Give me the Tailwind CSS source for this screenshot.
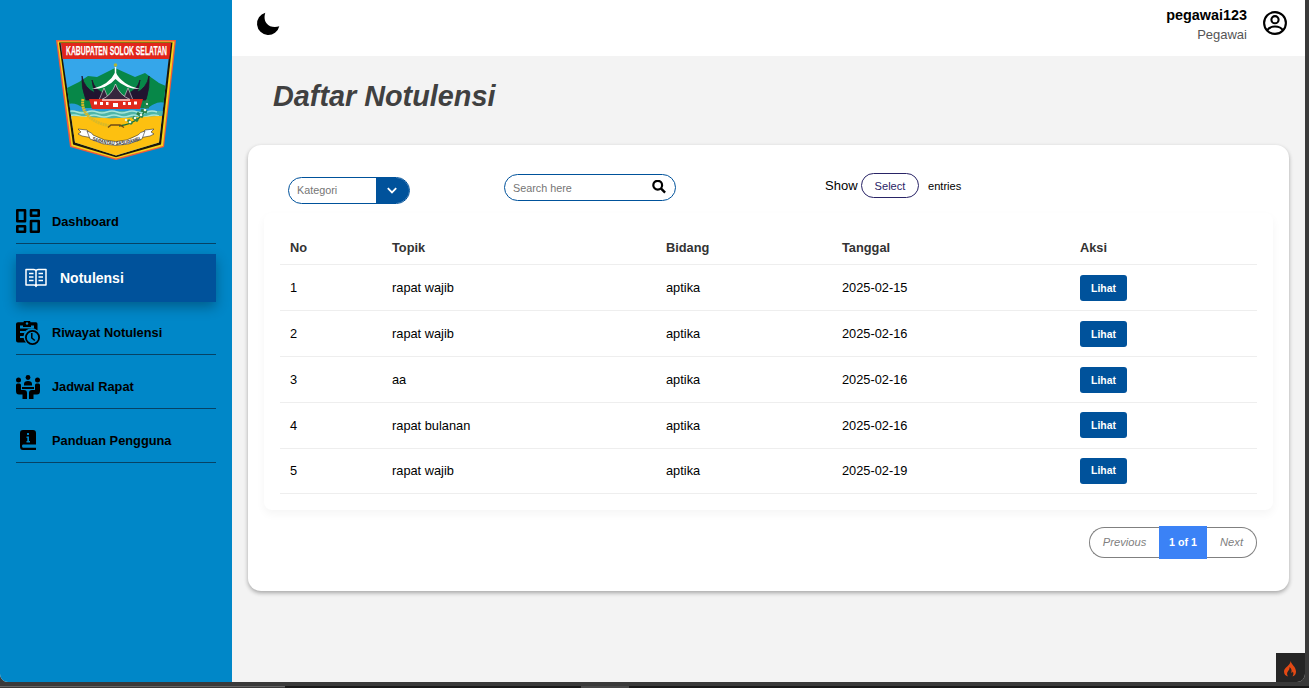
<!DOCTYPE html>
<html lang="id">
<head>
<meta charset="utf-8">
<title>Daftar Notulensi</title>
<script src="https://cdn.jsdelivr.net/npm/@tailwindcss/browser@4"></script>
</head>
<body class="h-[688px] w-[1309px] overflow-hidden bg-[#3a3a3a] font-['Liberation_Sans',Arial,sans-serif] text-[12.8px] text-black">
<div class="relative flex h-[682px] w-[1305px] overflow-hidden rounded-b-lg bg-[#f3f3f3]">
  <aside class="flex w-[232px] shrink-0 flex-col bg-[#0087c8] px-4 pt-[39px]">
    <svg class="mx-auto h-[122px] w-[122px] shrink-0 overflow-visible" viewBox="0 0 122 122">
      <defs><clipPath id="shield"><path d="M5.500 4H115.500L104 103.500L61 116.500L20 103.500Z"/></clipPath></defs>
      <path d="M1 1H121L109 108L61 121L15 108Z" fill="#ef5a3c"/>
      <path d="M2.500 2.500H119.500L108 107L61 119.500L16.500 107Z" fill="#f6d21c"/>
      <path d="M4 3.500H117.500L106 105.500L61 118.200L18 105.500Z" fill="#1c1708"/>
      <g clip-path="url(#shield)">
        <path d="M0 0H122V122H0Z" fill="#35a6ea"/>
        <path d="M4 53L24 43L33 37L42 38L60 29L80 38L90 34L104 44L118 50V72H4Z" fill="#078748"/>
        <path d="M8 67C16 62 23 65 28 69H93C98 65 106 60 114 66V80H8Z" fill="#249bd7"/>
        <path d="M10 72H114V79H10Z" fill="#4fb5a8"/>
        <path d="M12 73q5-2 10 0t10 0t10 0t10 0t10 0t10 0t10 0t10 0t10 0M14 77q5-2 10 0t10 0t10 0t10 0t10 0t10 0t10 0t10 0t10 0" fill="none" stroke="#a9e6d8" stroke-width="1.400"/>
        <path d="M8 77C35 77 45 80 61 79C80 79 90 77 113 77V122H8Z" fill="#fdc010"/>
      </g>
      <path d="M6 4H116L114.300 20H7.700Z" fill="#e1251b"/>
      <text x="11" y="15.800" textLength="101" lengthAdjust="spacingAndGlyphs" font-size="13.200" font-weight="700" fill="#fff" stroke="#fff" stroke-width=".25">KABUPATEN SOLOK SELATAN</text>
      <circle cx="60.500" cy="26" r="1.800" fill="#b0b43a"/><path d="M60.500 28V36" stroke="#fff" stroke-width="1.500"/>
      <path d="M27 37Q29 49 40 54L47 61H31Q26 48 27 37ZM94 37Q92 49 81 54L75 61H91Q95 48 94 37ZM37 41Q40 52 51 55L54 61H42Q38 50 37 41ZM85 41Q82 52 71 55L68 61H80Q84 50 85 41Z" fill="#211430" stroke="#211430" stroke-width=".8"/>
      <path d="M49 49L54 61H44ZM73 49L78 61H68Z" fill="#35223d" stroke="#ddd" stroke-width=".6"/>
      <path d="M37 50Q54 46 60.500 33Q67 46 85 50Q70 50 60.500 40Q52 50 37 50Z" fill="#fff"/>
      <path d="M46 61Q57 56 60.500 45Q64 56 76 61Z" fill="#37253e" stroke="#ddd" stroke-width=".7"/>
      <path d="M34 60H88L85 70H37Z" fill="#df2b1e"/>
      <path d="M47 61H75" stroke="#fff" stroke-width="1.200"/>
      <path d="M39 62.500h3v3h-3zM45 63h3v3h-3zM51 63h2.500v3h-2.500zM58 64h5v4h-5zM68 63h2.500v3h-2.500zM73 63h3v3h-3zM79 62.500h3v3h-3z" fill="#fff"/>
      <path d="M28 60C25 76 41 85 56 87" fill="none" stroke="#d9b928" stroke-width="3" stroke-dasharray="2 .5"/>
      <path d="M92 62C92 76 80 85 64 87" fill="none" stroke="#14713f" stroke-width="1.300"/>
      <path d="M93 61l-3 4m4 3l-5 0m3 5l-6-2m2 7l-6-4m1 8l-5-4m-1 7l-4-4" stroke="#28834a" stroke-width="3"/>
      <g fill="#eef7e7"><circle cx="92" cy="65" r="1.100"/><circle cx="90" cy="71" r="1.300"/><circle cx="86" cy="76" r="1.300"/><circle cx="80" cy="79" r="1.300"/><circle cx="75" cy="83" r="1.300"/><circle cx="71" cy="81" r="1.200"/></g>
      <path d="M53 88.500L56 86H65L69 88.500" fill="none" stroke="#704914" stroke-width="1.300"/>
      <path d="M23 90L32 91L38 99L27 97L23 95L26 93ZM99 90L90 91L84 99L95 97L99 95L96 93Z" fill="#fff" stroke="#333" stroke-width=".6"/>
      <path d="M32 92Q38 94 38 96Q61 109 83 96Q85 93 90 92L87 100Q61 113 35 100Z" fill="#fff" stroke="#333" stroke-width=".6"/>
      <path id="curve" d="M36 100.500Q61 111.500 87 100.500" fill="none"/>
      <text font-size="5.200" font-weight="700" fill="#333"><textPath href="#curve" startOffset="1" textLength="50" lengthAdjust="spacingAndGlyphs">SARANTAU SASURAMBI</textPath></text>
    </svg>
    <nav class="mt-[38px] flex flex-col font-bold">
      <a class="flex h-[45px] items-center gap-3 border-b border-[#064265]">
        <svg class="size-6" viewBox="0 0 24 24" fill="none" stroke="#000" stroke-width="2.600"><path d="M1.300 1.300H9V12.300H1.300ZM15 1.300H22.700V6.700H15ZM1.300 17.300H9V22.700H1.300ZM15 12H22.700V22.700H15Z" stroke-linejoin="round"/></svg>
        <span class="pt-px">Dashboard</span></a>
      <a class="mt-[10px] flex h-12 items-center gap-3 bg-[#00529b] pl-2 text-sm text-white shadow-[0_5px_12px_rgba(0,0,0,0.3)]">
        <svg class="h-5 w-6" viewBox="0 0 24 20" fill="none" stroke="#fff"><path d="M2 1.500H9.500Q12 1.500 12 3.500Q12 1.500 14.500 1.500H22V17H14Q12 17 12 18.500Q12 17 10 17H2ZM12 3.500V18.500" stroke-width="1.500" stroke-linejoin="round"/><path d="M5 5.500H9.500M5 9H9.500M5 12.500H9.500M14.500 5.500H19M14.500 9H19M14.500 12.500H19" stroke-width="1.500"/></svg>
        <span>Notulensi</span></a>
      <a class="mt-2 flex h-[45px] items-center gap-3 border-b border-[#064265]">
        <svg class="mt-[2px] size-6" viewBox="0 0 24 24"><path d="M2 1.200H7.500A3.600 3.600 0 0 1 14.500 1.200H20Q21.500 1.200 21.500 3V9.500A7.800 7.800 0 0 0 10 21.500H2Q0 21.500 0 19.500V3Q0 1.200 2 1.200Z"/><path d="M4 4.500H7V6H15V4.500H18V7.500H4ZM4 10H10L8.500 12H4ZM4 15H8V17H4Z" fill="#0087c8"/><circle cx="11" cy="2.500" r="1.200" fill="#0087c8"/><circle cx="16.500" cy="16.500" r="6.600" fill="#0087c8" stroke="#000" stroke-width="1.800"/><path d="M15.800 12V17L18.800 19.500" fill="none" stroke="#000" stroke-width="1.500"/></svg>
        <span class="pt-px">Riwayat Notulensi</span></a>
      <a class="mt-[9px] flex h-[45px] items-center gap-3 border-b border-[#064265]">
        <svg class="mt-[2px] size-6" viewBox="0 0 24 24"><circle cx="12" cy="2.500" r="2.400"/><circle cx="2.500" cy="5" r="2.500"/><circle cx="21.500" cy="5" r="2.500"/><path d="M8 10.500V9Q8 6 12 6T16 9V10.500ZM6 12H18V14H6ZM0 10Q0 8.500 1.500 8.500H3.500Q5 8.500 5 10V15H8Q11 15 11 18V24H6.500V19.500H3Q0 19.500 0 16ZM24 10Q24 8.500 22.500 8.500H20.500Q19 8.500 19 10V15H16Q13 15 13 18V24H17.500V19.500H21Q24 19.500 24 16Z"/></svg>
        <span class="pt-px">Jadwal Rapat</span></a>
      <a class="mt-[9px] flex h-[45px] items-center gap-3 border-b border-[#064265]">
        <svg class="size-6" viewBox="0 0 24 24"><path d="M7 2H17Q20 2 20 5V16.500H7Q6 16.500 6 18T7 19.800H20V22H7Q4 22 4 18.500V5Q4 2 7 2Z"/><path d="M11 5H13V7H11ZM10.500 8.500H13V13H14V14.500H10.500V13H11.300V10H10.500Z" fill="#0087c8"/></svg>
        <span class="pt-px">Panduan Pengguna</span></a>
    </nav>
  </aside>

  <main class="flex flex-1 flex-col">
    <header class="flex h-14 shrink-0 items-start justify-between bg-white pr-[18px] pl-6">
      <svg class="mt-3 size-6" viewBox="0 0 24 24"><path d="M9.300 .8C8.300 4 8 8 10.500 11.200C13.500 15 18.500 15.800 23.300 14.300A11.300 11.300 0 1 1 9.300 .8Z"/></svg>
      <div class="flex gap-4">
        <div class="flex flex-col items-end pt-[6px]"><b class="text-[14.4px] leading-[19px]">pegawai123</b><span class="text-[13px] leading-[19px] text-[#555]">Pegawai</span></div>
        <svg class="mt-[11px] size-6" viewBox="0 0 24 24" fill="none" stroke="#000" stroke-width="2.100"><circle cx="12" cy="12" r="10.900"/><circle cx="12" cy="8.700" r="3.600"/><path d="M4 19.500C7 14.200 17 14.200 20 19.500"/></svg>
      </div>
    </header>
    <h1 class="mt-[23px] ml-[41px] text-[28.8px] leading-[34px] font-bold text-[#404040] italic">Daftar Notulensi</h1>
    <section class="mt-8 ml-4 flex h-[446px] w-[1041px] flex-col rounded-[13px] bg-white px-4 shadow-[0_2px_4px_rgba(0,0,0,0.32)]">
      <div class="flex h-[68px] shrink-0 items-start pl-6 text-[11px]">
        <div class="mt-8 flex h-[27px] w-[122px] overflow-hidden rounded-[14px] border border-[#00529b]">
          <span class="w-[87px] pl-2 text-[10.800px] leading-[25px] text-[#757575]">Kategori</span>
          <span class="flex flex-1 items-center justify-center bg-[#00529b] pr-[2px]"><svg class="size-[10px]" viewBox="0 0 10 10"><path d="M.8 2.200L5 6.400L9.200 2.200" fill="none" stroke="#fff" stroke-width="1.800"/></svg></span>
        </div>
        <div class="mt-[29px] ml-[94px] flex h-[27px] w-[172px] items-start justify-between rounded-[14px] border border-[#00529b] pr-[9px] pl-2 text-[10.800px] leading-[26px] text-[#757575]">Search here
          <svg class="mt-[5px] size-[14px]" viewBox="0 0 14 14" fill="none" stroke="#000"><circle cx="5.700" cy="5.200" r="4.400" stroke-width="2.200"/><path d="M8.900 8.400L13.100 12.600" stroke-width="2.400"/></svg>
        </div>
        <div class="mt-7 ml-[149px] flex h-[25px] items-center text-[11.100px]"><span class="w-8 text-[13px]">Show</span><span class="ml-1 flex h-[25px] w-[58px] items-center justify-center rounded-[13px] border border-[#292466] pt-px text-[#292466]">Select</span><span class="ml-[9px] pt-px">entries</span></div>
      </div>
      <div class="h-[297px] w-[1009px] shrink-0 rounded-lg px-4 pt-4 shadow-[0_4px_10px_rgba(0,0,0,0.045)]">
        <table class="w-[977px] table-fixed border-collapse text-left text-[12.800px]">
          <colgroup><col class="w-[102px]"><col class="w-[274px]"><col class="w-[176px]"><col class="w-[238px]"><col></colgroup>
          <thead><tr class="h-[35px] border-b border-[#eee] text-[#333] [&>th]:pt-[2px] [&>th]:pl-[10px] [&>th]:font-bold"><th>No</th><th>Topik</th><th>Bidang</th><th>Tanggal</th><th>Aksi</th></tr></thead>
          <tbody class="[&>tr]:h-[46px] [&>tr]:border-b [&>tr]:border-[#eee] [&_td]:p-0 [&_td]:pt-[2px] [&_td]:pl-[10px] [&_a]:flex [&_a]:h-[26px] [&_a]:w-[47px] [&_a]:items-center [&_a]:justify-center [&_a]:rounded-[3px] [&_a]:bg-[#00529b] [&_a]:pt-px [&_a]:text-[10.400px] [&_a]:font-bold [&_a]:text-white">
            <tr><td>1</td><td>rapat wajib</td><td>aptika</td><td>2025-02-15</td><td><a>Lihat</a></td></tr>
            <tr><td>2</td><td>rapat wajib</td><td>aptika</td><td>2025-02-16</td><td><a>Lihat</a></td></tr>
            <tr><td>3</td><td>aa</td><td>aptika</td><td>2025-02-16</td><td><a>Lihat</a></td></tr>
            <tr><td>4</td><td>rapat bulanan</td><td>aptika</td><td>2025-02-16</td><td class="pt-0!"><a>Lihat</a></td></tr>
            <tr class="h-[45px]!"><td class="pt-0!">5</td><td class="pt-0!">rapat wajib</td><td class="pt-0!">aptika</td><td class="pt-0!">2025-02-19</td><td class="pt-0!"><a>Lihat</a></td></tr>
          </tbody>
        </table>
      </div>
      <div class="mt-4 mr-4 flex h-[33px] items-center self-end text-[11.200px] text-[#808080] italic">
        <span class="flex h-[31px] w-[70px] items-center justify-center rounded-l-[16px] border border-r-0 border-[#808080]">Previous</span>
        <b class="flex h-[33px] w-12 items-center justify-center bg-[#3b82f6] text-[10.700px] text-white not-italic">1 of 1</b>
        <span class="flex h-[31px] w-[50px] items-center justify-center rounded-r-[16px] border border-l-0 border-[#808080]">Next</span>
      </div>
    </section>
  </main>
  <div class="absolute right-0 bottom-0 flex h-[29px] w-[29px] items-center justify-center bg-[#252525] pt-[2px] pr-px">
    <svg class="h-4 w-3" viewBox="0 0 12 16"><path d="M6.500 0C7.500 3.500 12 6 12 10.500Q12 14.500 8.500 15.500Q10.200 13 9 10.500Q8.300 12 7.200 11.500Q8.500 8.500 5.500 6Q6 8.500 4.200 10Q2 12.500 4 15.500Q0 14.500 0 10.500C0 6 6.500 5 6.500 0Z" fill="#e34914"/></svg>
  </div>
</div>
<footer class="mt-1 flex h-[2px]"><i class="w-[285px] border-t border-[#666] bg-[#3a3a3a]"></i><i class="w-[296px] bg-[#191919]"></i><i class="w-12 bg-[#484848]"></i><i class="flex-1 bg-[#191919]"></i></footer>
</body>
</html>
